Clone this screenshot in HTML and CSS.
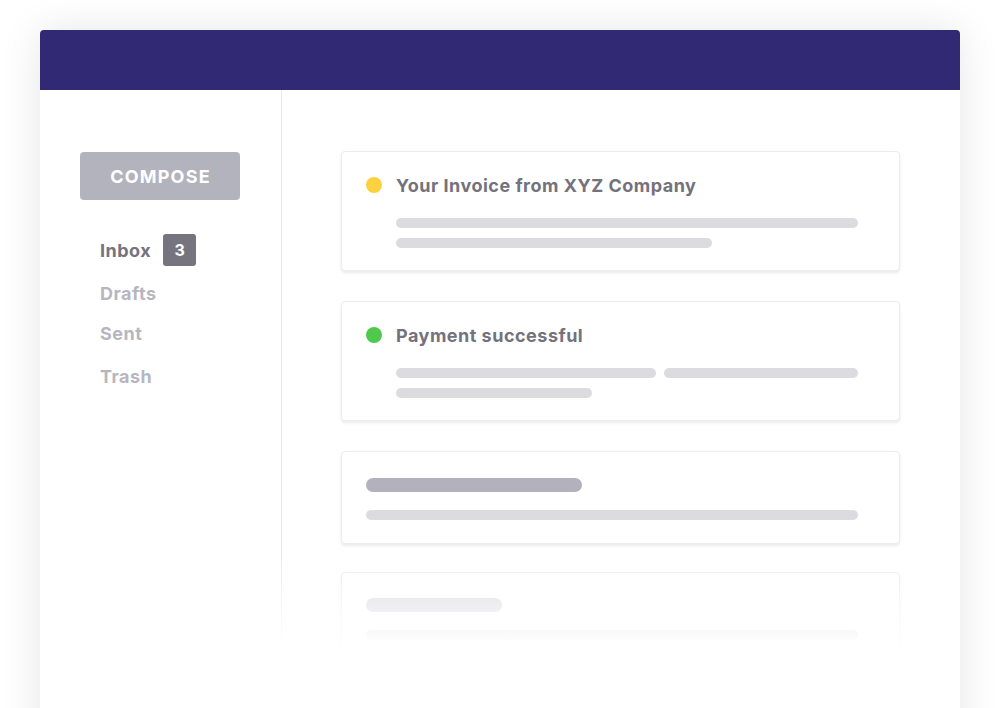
FILE: index.html
```html
<!DOCTYPE html>
<html>
<head>
<meta charset="utf-8">
<link rel="stylesheet" href="styles.css">
</head>
<body>
<div class="window">
  <div class="topbar"></div>
  <div class="main">
    <aside class="sidebar">
      <button class="compose">COMPOSE</button>
      <nav class="nav">
        <div class="nav-item active">Inbox <span class="badge">3</span></div>
        <div class="nav-item">Drafts</div>
        <div class="nav-item">Sent</div>
        <div class="nav-item trash">Trash</div>
      </nav>
    </aside>
    <section class="content">
      <div class="card">
        <div class="card-title"><span class="dot yellow"></span>Your Invoice from XYZ Company</div>
        <div class="lines">
          <div class="row"><span class="line" style="width:462px"></span></div>
          <div class="row"><span class="line" style="width:316px"></span></div>
        </div>
      </div>
      <div class="card">
        <div class="card-title"><span class="dot green"></span>Payment successful</div>
        <div class="lines">
          <div class="row"><span class="line" style="width:260px"></span><span class="line" style="width:194px"></span></div>
          <div class="row"><span class="line" style="width:196px"></span></div>
        </div>
      </div>
      <div class="card card-skel">
        <span class="bar" style="width:216px"></span>
        <span class="line" style="width:492px"></span>
      </div>
      <div class="card card-skel card-faded">
        <span class="bar light" style="width:136px"></span>
        <span class="line" style="width:492px"></span>
      </div>
    </section>
    <div class="fade"></div>
  </div>
</div>
</body>
</html>
```
FILE: styles.css
```css
* { box-sizing: border-box; }
html, body { margin: 0; padding: 0; }
body {
  background: #ffffff;
  width: 1000px;
  height: 708px;
  overflow: hidden;
  font-family: Inter, Roboto, "Liberation Sans", sans-serif;
  padding: 30px 40px 0;
}
.window {
  width: 920px;
  height: 760px;
  background: #fff;
  border-radius: 4px 4px 0 0;
  box-shadow: 0 0 40px rgba(0, 0, 0, 0.10);
  display: flex;
  flex-direction: column;
}
.topbar {
  height: 60px;
  background: #322974;
  border-radius: 4px 4px 0 0;
  flex: none;
}
.main {
  flex: 1;
  display: flex;
  position: relative;
}
.sidebar {
  width: 242px;
  border-right: 1px solid #e9e9ec;
  padding: 62px 40px 0;
  flex: none;
}
.compose {
  display: block;
  width: 160px;
  height: 48px;
  border: none;
  border-radius: 4px;
  background: #b3b3bd;
  color: #fff;
  font-family: inherit;
  font-weight: 700;
  font-size: 18px;
  letter-spacing: 1.2px;
  padding: 0 0 0 1px;
}
.nav {
  padding: 34px 0 0 20px;
  display: flex;
  flex-direction: column;
}
.nav-item {
  font-size: 18px;
  font-weight: 700;
  letter-spacing: 0.5px;
  color: #b7b6c0;
  height: 40px;
  display: flex;
  align-items: center;
}
.nav-item.active {
  color: #74737e;
  height: 32px;
  margin-bottom: 7px;
}
.nav-item.trash {
  margin-top: 3px;
}
.badge {
  width: 33px;
  height: 32px;
  margin-left: 12px;
  background: #76757f;
  color: #fff;
  border-radius: 3px;
  display: inline-flex;
  align-items: center;
  justify-content: center;
  font-size: 16px;
  letter-spacing: 0;
}
.content {
  flex: 1;
  padding: 61px 60px 0 59px;
  display: flex;
  flex-direction: column;
  gap: 30px;
}
.card {
  border: 1px solid #ececf1;
  border-radius: 4px;
  box-shadow: 0 2px 3px rgba(60, 60, 90, 0.10);
  padding: 23px 24px 22px;
  background: #fff;
  height: 120px;
}
.card-title {
  display: flex;
  align-items: center;
  font-size: 18px;
  font-weight: 700;
  letter-spacing: 0.5px;
  color: #73727d;
  height: 20px;
}
.dot {
  width: 16px;
  height: 16px;
  border-radius: 50%;
  margin-right: 14px;
  flex: none;
}
.yellow { background: #fed140; }
.green { background: #4ec94e; }
.lines {
  padding: 23px 0 0 30px;
  display: flex;
  flex-direction: column;
  gap: 10px;
}
.row {
  display: flex;
  gap: 8px;
}
.line {
  display: block;
  height: 10px;
  border-radius: 5px;
  background: #dcdce0;
}
.card-skel {
  height: 93px;
  padding-top: 26px;
  display: flex;
  flex-direction: column;
  gap: 18px;
}
.card-faded {
  margin-top: -2px;
  padding-top: 25px;
}
.bar {
  display: block;
  height: 14px;
  border-radius: 7px;
  background: #b3b2bc;
}
.bar.light { background: #d8d8de; }
.fade {
  position: absolute;
  left: 0;
  right: 0;
  top: 462px;
  bottom: 0;
  background: linear-gradient(to bottom, rgba(255,255,255,0) 0px, rgba(255,255,255,0.9) 85px, #fff 105px);
  pointer-events: none;
}
```
